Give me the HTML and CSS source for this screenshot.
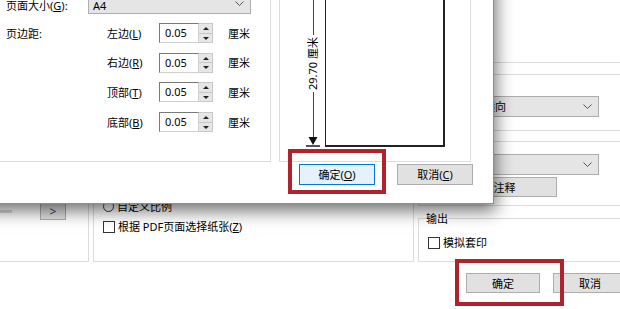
FILE: index.html
```html
<!DOCTYPE html>
<html lang="zh-CN">

<head>
    <meta charset="UTF-8">
    <title>打印</title>
    <link rel="stylesheet" href="styles.css">
</head>

<body>
    <!-- print window behind -->
    <div class="print-window">
        <div class="panes">
            <div class="pane pane-left">
                <div class="zoom-row">
                    <span class="slider"></span>
                    <button class="btn btn-small">&gt;</button>
                </div>
            </div>
            <div class="pane pane-mid">
                <label class="opt"><span class="radio"></span>自定义比例</label>
                <label class="opt"><span class="check"></span>根据 PDF页面选择纸张(<u>Z</u>)</label>
            </div>
            <div class="pane-right">
                <div class="group g-top"></div>
                <div class="group g-orient">
                    <div class="combo combo-wide"><span>自动纵向/横向</span><svg class="chev" width="9" height="5" viewBox="0 0 9 5"><polyline points="0.5,0.5 4.5,4.5 8.5,0.5" fill="none" stroke="#555" /></svg></div>
                </div>
                <div class="group g-comments">
                    <div class="combo combo-wide"><span></span><svg class="chev" width="9" height="5" viewBox="0 0 9 5"><polyline points="0.5,0.5 4.5,4.5 8.5,0.5" fill="none" stroke="#555" /></svg></div>
                    <button class="btn btn-summary">汇总注释</button>
                </div>
                <fieldset class="group g-output">
                    <legend>输出</legend>
                    <label class="opt"><span class="check"></span>模拟套印</label>
                </fieldset>
            </div>
        </div>
        <div class="actions">
            <button class="btn btn-main">确定</button>
            <button class="btn btn-main">取消</button>
        </div>
    </div>

    <!-- page setup dialog on top -->
    <div class="setup">
        <div class="setup-body">
            <div class="group paper-group">
                <div class="size-row">
                    <span class="size-label">页面大小(<u>G</u>):</span>
                    <div class="combo combo-size"><span>A4</span><svg class="chev" width="9" height="5" viewBox="0 0 9 5"><polyline points="0.5,0.5 4.5,4.5 8.5,0.5" fill="none" stroke="#555" /></svg></div>
                </div>
                <div class="margins">
                    <span class="margins-title">页边距:</span>

                    <span class="m-lbl">左边(<u>L</u>)</span>
                    <div class="spin"><span class="spin-val">0.05</span><span class="spin-btns"><i class="up"></i><i class="down"></i></span></div>
                    <span class="unit">厘米</span>

                    <span class="m-lbl">右边(<u>R</u>)</span>
                    <div class="spin"><span class="spin-val">0.05</span><span class="spin-btns"><i class="up"></i><i class="down"></i></span></div>
                    <span class="unit">厘米</span>

                    <span class="m-lbl">顶部(<u>T</u>)</span>
                    <div class="spin"><span class="spin-val">0.05</span><span class="spin-btns"><i class="up"></i><i class="down"></i></span></div>
                    <span class="unit">厘米</span>

                    <span class="m-lbl">底部(<u>B</u>)</span>
                    <div class="spin"><span class="spin-val">0.05</span><span class="spin-btns"><i class="up"></i><i class="down"></i></span></div>
                    <span class="unit">厘米</span>
                </div>
            </div>
            <div class="group preview">
                <div class="dim">
                    <span class="dim-line dim-top"></span>
                    <span class="dim-text">29.70 厘米</span>
                    <span class="dim-line dim-bottom"></span>
                    <svg class="dim-arrow" width="14" height="10" viewBox="0 0 14 10">
                        <polygon points="2.5,0 11.5,0 7,8" fill="#111" />
                        <rect x="0" y="8" width="14" height="2" fill="#555" />
                    </svg>
                </div>
                <div class="paper"></div>
            </div>
        </div>
        <div class="setup-actions">
            <button class="btn btn-default">确定(<u>O</u>)</button>
            <button class="btn">取消(<u>C</u>)</button>
        </div>
    </div>

    <div class="mark mark-setup"></div>
    <div class="mark mark-print"></div>
</body>

</html>
```

FILE: styles.css
```css
* {
    box-sizing: border-box;
}

body {
    margin: 0;
    width: 620px;
    height: 309px;
    overflow: hidden;
    position: relative;
    background: #fff;
    font-family: "Noto Sans", "Noto Sans CJK SC", sans-serif;
    font-size: 11px;
    line-height: 13px;
    color: #000;
}

u {
    text-decoration: underline;
    text-underline-offset: 1px;
}

.btn {
    font: inherit;
    color: #000;
    background-color: #e1e1e1;
    border: 1px solid #adadad;
    padding: 0;
    margin: 0;
    height: 20px;
}

/* ---------- print window ---------- */

.print-window {
    display: flex;
    flex-direction: column;
}

.panes {
    display: flex;
    height: 262px;
}

.panes > * {
    flex-shrink: 0;
}

.pane {
    border: 1px solid #dcdcdc;
    border-top: none;
}

.pane-left {
    margin-left: -10px;
    width: 99px;
    border-left: none;
    padding-top: 203px;
}

.zoom-row {
    display: flex;
    align-items: center;
    padding-left: 10px;
}

.slider {
    width: 12px;
    height: 3px;
    background-color: #d6d6d6;
    margin-right: 28px;
}

.btn-small {
    width: 26px;
    height: 17px;
    color: #1e3a6e;
    font-size: 12px;
    line-height: 14px;
}

.pane-mid {
    margin-left: 4px;
    width: 321px;
    padding: 200px 0 0 9px;
    display: flex;
    flex-direction: column;
    gap: 7px;
}

.opt {
    display: flex;
    align-items: center;
    height: 13px;
    white-space: nowrap;
}

.radio {
    width: 11px;
    height: 11px;
    border: 1px solid #333;
    border-radius: 50%;
    margin-right: 3px;
}

.check {
    width: 12px;
    height: 12px;
    border: 1px solid #333;
    background: #fff;
    margin-right: 3px;
}

.pane-right {
    margin-left: 4px;
    width: 222px;
    display: flex;
    flex-direction: column;
}

.group {
    border: 1px solid #dcdcdc;
}

.g-top {
    height: 63px;
    border-top: none;
}

.g-orient {
    margin-top: 11px;
    height: 57px;
    padding: 21px 0 0 11px;
}

.g-comments {
    margin-top: 10px;
    height: 65px;
    padding: 12px 0 0 11px;
}

.combo {
    display: flex;
    align-items: center;
    justify-content: space-between;
    height: 21px;
    background-color: #e5e5e5;
    border: 1px solid #adadad;
    padding: 0 6px 0 5px;
    white-space: nowrap;
}

.combo-wide {
    width: 169px;
}

.btn-summary {
    display: block;
    margin-top: 2px;
    width: 127px;
}

.g-output {
    margin: 6px 0 0 0;
    flex: 1;
    padding: 0 0 0 9px;
    min-width: 0;
}

.g-output legend {
    padding: 0;
    margin-left: -2px;
    line-height: 13px;
}

.g-output .opt {
    margin-top: 11px;
}

.actions {
    display: flex;
    justify-content: flex-end;
    gap: 13px;
    padding-top: 11px;
    margin-right: -7px;
}

.btn-main {
    width: 74px;
}

/* ---------- page setup dialog ---------- */

.setup {
    position: absolute;
    left: -20px;
    top: -40px;
    width: 514px;
    height: 244px;
    background: #fff;
    border-right: 1px solid #8c8c8c;
    border-bottom: 1px solid #8c8c8c;
    box-shadow: 2px 7px 16px rgba(0, 0, 0, 0.55);
    display: flex;
    flex-direction: column;
}

.setup-body {
    display: flex;
    gap: 8px;
    height: 202px;
    padding: 10px 0 0 10px;
}

.paper-group {
    width: 281px;
    padding: 22px 0 0 15px;
}

.size-row {
    display: flex;
    align-items: center;
    height: 21px;
}

.size-label {
    width: 82px;
    padding-top: 4px;
}

.combo-size {
    width: 163px;
    padding-left: 4px;
}

.combo-size span {
    padding-top: 3px;
}

.margins {
    display: grid;
    grid-template-columns: 101px 52px 54px auto;
    grid-auto-rows: 20px;
    row-gap: 9.7px;
    align-items: center;
    margin-top: 9px;
}

.margins-title {
    grid-column: 1;
}

.m-lbl {
    grid-column: 2;
    white-space: nowrap;
}

.spin {
    display: flex;
    height: 20px;
}

.spin-val {
    width: 40px;
    border: 1px solid #7a7a7a;
    border-right-color: #d0d0d0;
    border-bottom-color: #d0d0d0;
    padding: 2px 0 0 5px;
}

.spin-btns {
    width: 14px;
    display: flex;
    flex-direction: column;
    border: 1px solid #c8c8c8;
    border-left: none;
}

.spin-btns i {
    flex: 1;
    background-color: #e6e6e6;
    position: relative;
}

.spin-btns i + i {
    border-top: 1px solid #c8c8c8;
}

.spin-btns .up::after,
.spin-btns .down::after {
    content: "";
    position: absolute;
    left: 4px;
    top: 3px;
    border-left: 3px solid transparent;
    border-right: 3px solid transparent;
}

.spin-btns .up::after {
    border-bottom: 3px solid #222;
}

.spin-btns .down::after {
    border-top: 3px solid #222;
}

.unit {
    margin-left: 15px;
}

.preview {
    width: 192px;
    display: flex;
    padding: 0 0 14px 26px;
}

.dim {
    width: 14px;
    display: flex;
    flex-direction: column;
    align-items: center;
}

.dim-line {
    width: 1px;
    background-color: #444;
}

.dim-top {
    height: 64px;
}

.dim-text {
    writing-mode: vertical-rl;
    text-orientation: sideways;
    transform: rotate(180deg);
    white-space: nowrap;
    padding: 2px 0;
    line-height: 12px;
}

.dim-bottom {
    flex: 1;
}

.paper {
    margin-left: 5px;
    width: 120px;
    border: 1px solid #222;
    border-right-width: 2px;
    border-bottom-width: 2px;
    border-top: none;
}

.setup-actions {
    display: flex;
    justify-content: flex-end;
    gap: 22px;
    padding-right: 20px;
    margin-top: 2px;
}

.setup-actions .btn {
    width: 76px;
    height: 21px;
}

.btn-default {
    background-color: #e5f1fb;
    border-color: #0078d7;
}

/* ---------- red highlight frames ---------- */

.mark {
    position: absolute;
    border: 4px solid #b1232b;
}

.mark-setup {
    left: 288px;
    top: 149px;
    width: 98px;
    height: 45px;
}

.mark-print {
    left: 455px;
    top: 259px;
    width: 109px;
    height: 47px;
}
```
